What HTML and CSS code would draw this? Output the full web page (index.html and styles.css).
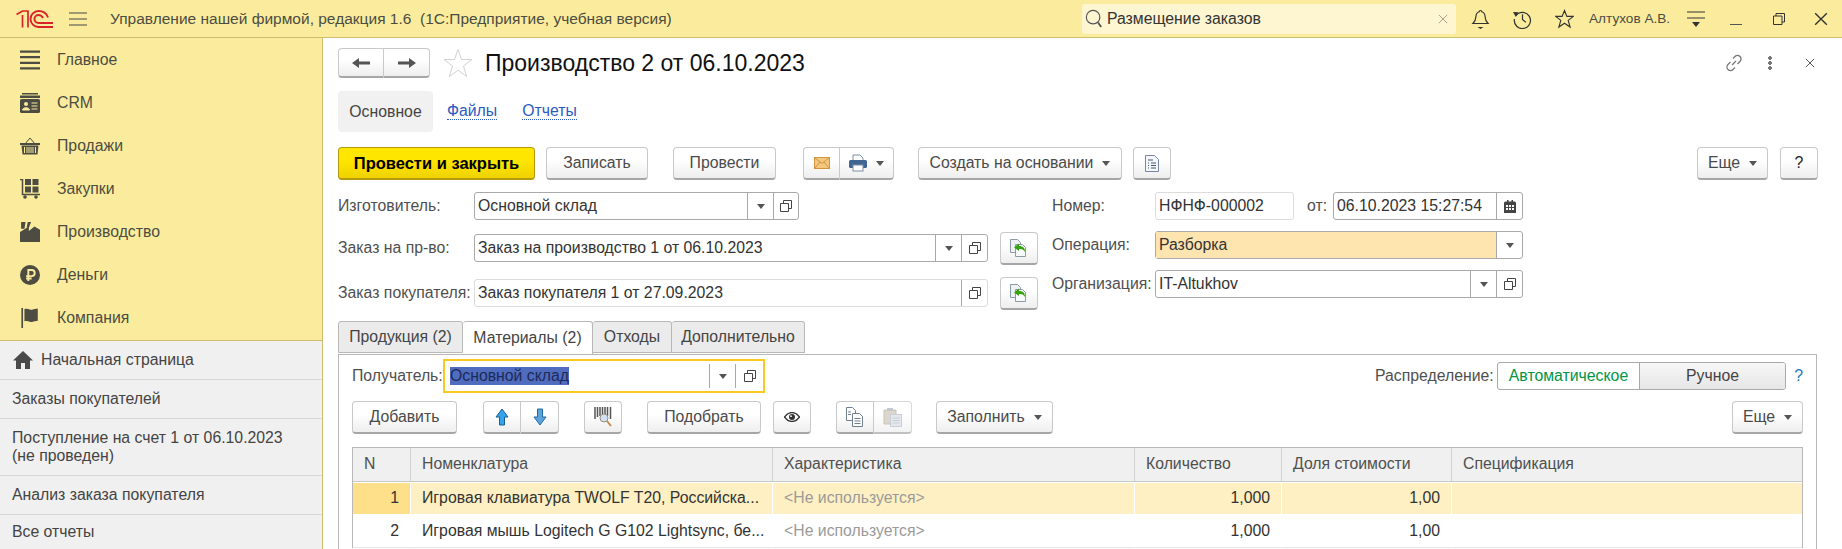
FILE: index.html

```html
<!DOCTYPE html>
<html lang="ru">
<head>
  <meta charset="UTF-8" />
  <meta name="viewport" content="width=device-width, initial-scale=1.0" />
  <title>Производство 2 от 06.10.2023</title>
  <link rel="stylesheet" href="styles.css">
</head>
<body>
  <svg class="sprite" xmlns="http://www.w3.org/2000/svg">
    <symbol id="i-caret" viewBox="0 0 8 5"><path d="M0 0h8L4 5z" fill="#555"/></symbol>
    <symbol id="i-open" viewBox="0 0 14 14"><path d="M4.500 4.500V1.500H12.500V9.500H9.500M1.500 4.500H9.500V12.500H1.500z" fill="none" stroke="#444" stroke-width="1"/></symbol>
    <symbol id="i-left" viewBox="0 0 18 12"><path d="M0 6l7-5v3.500h11v3H7V11z" fill="#555"/></symbol>
    <symbol id="i-right" viewBox="0 0 18 12"><path d="M18 6l-7-5v3.500H0v3h11V11z" fill="#555"/></symbol>
    <symbol id="i-star" viewBox="0 0 30 30"><path d="M15 1.500l3.500 10h10.500l-8.500 6.500 3.200 10.500L15 22.200 6.300 28.500 9.500 18 1 11.500h10.500z" fill="#fff" stroke="#d2d2d2" stroke-width="1"/></symbol>
    <symbol id="i-mail" viewBox="0 0 16 12"><rect x=".5" y=".5" width="15" height="11" fill="#f3c77f" stroke="#d2953b"/><path d="M1 1l7 5.500L15 1M1 11l5-6M15 11l-5-6" fill="none" stroke="#d2953b"/></symbol>
    <symbol id="i-print" viewBox="0 0 18 18"><path d="M4 1h7l3 3v4H4z" fill="#fff" stroke="#7d8ea3"/><rect y="6" width="18" height="8" rx="1.500" fill="#3f6791"/><rect x="4" y="11" width="10" height="6" fill="#fff" stroke="#7d8ea3"/></symbol>
    <symbol id="i-doc" viewBox="0 0 14 17"><path d="M.5.5h9l4 4v12H.5z" fill="#f4f7fb" stroke="#7488a5"/><path d="M3 5h5M3 8h1M6 8h5M3 10.500h1M6 10.500h5M3 13h1M6 13h5" stroke="#44566f"/></symbol>
    <symbol id="i-base" viewBox="0 0 20 20"><path d="M1.500 1.500h7l3 3v10h-10z" fill="#eef1f3" stroke="#8b9aa3"/><path d="M6.500 6.500h7l3 3v9h-10z" fill="#f7f9fa" stroke="#8b9aa3"/><path d="M5 9.500L10 5.500v2.500c4 0 6 2 6 6-1.500-2.500-3-3-6-3V13z" fill="#35a30f"/></symbol>
    <symbol id="i-cal" viewBox="0 0 12 13"><path d="M0 3a1.500 1.500 0 0 1 1.500-1.500H3V0h1.500v1.500h3V0H9v1.500h1.500A1.500 1.500 0 0 1 12 3v10H0z" fill="#444"/><path d="M2 5h2v2H2zM5 5h2v2H5zM8 5h2v2H8zM2 8h2v2H2zM5 8h2v2H5zM8 8h2v2H8z" fill="#fff"/></symbol>
    <symbol id="i-up" viewBox="0 0 14 18"><path d="M7 1l6 8H9.500v8h-5V9H1z" fill="#35a4ec" stroke="#14608f"/></symbol>
    <symbol id="i-down" viewBox="0 0 14 18"><path d="M7 17l6-8H9.500V1h-5v8H1z" fill="#5aa5dd" stroke="#27689c"/></symbol>
    <symbol id="i-barcode" viewBox="0 0 18 20"><path d="M1 0v12M3.500 0v10M6 0v9M8.500 0v7M11 0v7M13.500 0v9M16.500 0v12" stroke="#555" stroke-width="1.500"/><circle cx="10" cy="11" r="4" fill="#cfe3f5" stroke="#9a8f7c"/><path d="M13 14l4 5" stroke="#c28f4c" stroke-width="2"/></symbol>
    <symbol id="i-eye" viewBox="0 0 16 10"><path d="M.5 5C3 1.500 5.500.5 8 .5S13 1.500 15.500 5C13 8.500 10.500 9.500 8 9.500S3 8.500.5 5z" fill="#fff" stroke="#333" stroke-width="1.300"/><circle cx="8" cy="5" r="3" fill="#333"/><circle cx="7" cy="4.200" r=".9" fill="#fff"/></symbol>
    <symbol id="i-copy" viewBox="0 0 20 20"><path d="M1.500.5h6l3 3v10h-9z" fill="#fff" stroke="#6f7f8f"/><path d="M7.500 6.500h7l3 3v10h-10z" fill="#fff" stroke="#6f7f8f"/><path d="M3 5h3M3 7.500h3M9.500 11.500h6M9.500 14h6M9.500 16.500h6" stroke="#6f7f8f"/></symbol>
    <symbol id="i-paste" viewBox="0 0 20 20"><path d="M1 3h12v14H1z" fill="#cfc6bb" stroke="#b7ab9e"/><rect x="4" y="1" width="6" height="3" fill="#a9b2ba"/><path d="M7.500 7.500h11v12h-11z" fill="#d9dfe5" stroke="#b2bcc6"/><path d="M9.500 11h7M9.500 13.500h7M9.500 16h7" stroke="#b2bcc6"/></symbol>
    <symbol id="i-search" viewBox="0 0 20 22"><circle cx="9" cy="9" r="7.500" fill="none" stroke="#555" stroke-width="1.300"/><path d="M14.500 15l3.500 5" stroke="#555" stroke-width="2"/></symbol>
    <symbol id="i-cross" viewBox="0 0 12 12"><path d="M1 1l10 10M11 1L1 11" fill="none" stroke="currentColor" stroke-width="1.200"/></symbol>
    <symbol id="i-bell" viewBox="0 0 18 20"><path d="M9 1.500c.8 0 1.300.5 1.300 1.200 2.200.7 3.200 2.500 3.300 5 .1 3 1 4.800 3 6.800H1.400c2-2 2.900-3.800 3-6.800.1-2.500 1.100-4.300 3.300-5C7.700 2 8.200 1.500 9 1.500z" fill="none" stroke="#333" stroke-width="1.200"/><path d="M6 18h6L9 20z" fill="#333"/></symbol>
    <symbol id="i-history" viewBox="0 0 20 20"><path d="M3 6.500A8.500 8.500 0 1 1 1.500 10" fill="none" stroke="#333" stroke-width="1.300"/><path d="M0 2.500L5.800 3 3 8z" fill="#333"/><path d="M10 5v5.500l3.500 3" fill="none" stroke="#333" stroke-width="1.300"/></symbol>
    <symbol id="i-star-line" viewBox="0 0 20 20"><path d="M10 1l2.500 6.200h6.800l-5.400 4.300 2 7L10 14.500l-5.900 4 2-7L.7 7.200h6.800z" fill="none" stroke="#333" stroke-width="1.200"/></symbol>
    <symbol id="i-filter" viewBox="0 0 18 16"><path d="M0 1h18M0 7h18" stroke="#333"/><path d="M5 11h8l-4 5z" fill="#333"/></symbol>
    <symbol id="i-restore" viewBox="0 0 12 12"><path d="M3 3V.5h8.500V9H9M.5 3h8.500v8.500H.5z" fill="none" stroke="#333" stroke-width="1"/></symbol>
    <symbol id="i-link" viewBox="0 0 20 20"><path d="M8 12l4-4M9 5.500l2-2a3.500 3.500 0 0 1 5 5l-2.500 2.500M11 14.500l-2 2a3.500 3.500 0 0 1-5-5L6.500 9" fill="none" stroke="#777" stroke-width="1.300"/></symbol>
    <symbol id="i-main" viewBox="0 0 18 18"><path d="M0 1.500h18M0 6.500h18M0 11.500h18M0 16.500h18" stroke="#4c4c42" stroke-width="2"/></symbol>
    <symbol id="i-crm" viewBox="0 0 20 20"><path d="M2 0h16v1.500H2zM0 2.500h20V5H0z" fill="#4c4c42"/><rect y="6" width="20" height="14" rx="1.500" fill="#4c4c42"/><circle cx="6" cy="11" r="2" fill="#fbec9d"/><path d="M2.500 17c0-3 7-3 7 0zM11.500 10h6M11.500 13h6M11.500 16h6" fill="#fbec9d" stroke="#fbec9d" stroke-width="1"/></symbol>
    <symbol id="i-basket" viewBox="0 0 20 18"><path d="M5 7l5-6 5 6" fill="none" stroke="#4c4c42" stroke-width="1"/><path d="M0 6h20v2H0z" fill="#4c4c42"/><path d="M1.500 8.500h17l-1 9h-15z" fill="#4c4c42"/><path d="M4.500 10v6M7 10v6M9 10v6M11 10v6M13 10v6M15.500 10v6" stroke="#fbec9d"/></symbol>
    <symbol id="i-cart" viewBox="0 0 20 20"><path d="M0 .5h2.500v15H20" fill="none" stroke="#4c4c42" stroke-width="1.500"/><path d="M5 0h6v6H5zM12.500 0h6v6h-6zM5 7.500h6v6H5zM12.500 7.500h6v6h-6z" fill="#4c4c42"/><circle cx="5" cy="18" r="1.800" fill="#4c4c42"/><circle cx="16" cy="18" r="1.800" fill="#4c4c42"/></symbol>
    <symbol id="i-factory" viewBox="0 0 18 18"><path d="M1 0h4l-1 6H1zM7 0h3L8 5H6z" fill="#4c4c42"/><path d="M0 18V9l8-5v4l5-4 5 3v11z" fill="#4c4c42"/></symbol>
    <symbol id="i-money" viewBox="0 0 18 18"><circle cx="9" cy="9" r="9" fill="#4c4c42"/><path d="M7.500 14.500V4.500h3a2.700 2.700 0 0 1 0 5.500h-5M5.500 12.200h5" fill="none" stroke="#fbec9d" stroke-width="1.700"/></symbol>
    <symbol id="i-flag" viewBox="0 0 16 18"><path d="M1 0v18" stroke="#4c4c42" stroke-width="1.500"/><path d="M3 1c3-1.300 5 1 7 .5 1.500-.3 3-1 5-1v11c-2 0-3.500.7-5 1-2 .5-4-1.800-7-.5z" fill="#4c4c42"/></symbol>
    <symbol id="i-home" viewBox="0 0 20 18"><path d="M10 0l10 9.500h-3V18h-5v-6H8v6H3V9.500H0z" fill="#4a4a4a"/></symbol>
    <symbol id="i-logo" viewBox="0 0 37 18"><path d="M.5 4.500L6.500 1h5.500v16.500M6.500 5v12.500" fill="none" stroke="#d8232a" stroke-width="1.700"/><path d="M32 7.500C30.500 3 27 1 22.500 1a8 8 0 0 0 0 16H37M27 8c-1-2-2.500-3-4.500-3a4 4 0 0 0 0 8H37" fill="none" stroke="#d8232a" stroke-width="1.900"/></symbol>
    <symbol id="i-burger" viewBox="0 0 18 14"><path d="M0 1h18M0 7h18M0 13h18" stroke="#444" stroke-width="1.200"/></symbol>
  </svg>

  <header class="topbar">
    <svg class="logo"><use href="#i-logo"/></svg>
    <svg class="burger"><use href="#i-burger"/></svg>
    <div class="app-title">Управление нашей фирмой, редакция 1.6&nbsp; (1С:Предприятие, учебная версия)</div>
    <div class="search">
      <svg class="search-icon"><use href="#i-search"/></svg>
      <span class="search-text">Размещение заказов</span>
      <svg class="search-clear"><use href="#i-cross"/></svg>
    </div>
    <svg class="top-icon bell"><use href="#i-bell"/></svg>
    <svg class="top-icon history"><use href="#i-history"/></svg>
    <svg class="top-icon fav"><use href="#i-star-line"/></svg>
    <span class="user">Алтухов А.В.</span>
    <svg class="filter"><use href="#i-filter"/></svg>
    <span class="win-min"></span>
    <svg class="win-restore"><use href="#i-restore"/></svg>
    <svg class="win-close"><use href="#i-cross"/></svg>
  </header>

  <div class="layout">
    <aside class="sidebar">
      <nav class="sections">
        <a class="section"><svg><use href="#i-main"/></svg>Главное</a>
        <a class="section"><svg><use href="#i-crm"/></svg>CRM</a>
        <a class="section"><svg><use href="#i-basket"/></svg>Продажи</a>
        <a class="section"><svg><use href="#i-cart"/></svg>Закупки</a>
        <a class="section"><svg><use href="#i-factory"/></svg>Производство</a>
        <a class="section"><svg><use href="#i-money"/></svg>Деньги</a>
        <a class="section"><svg><use href="#i-flag"/></svg>Компания</a>
      </nav>
      <div class="open-list">
        <div class="open-item open-home"><svg><use href="#i-home"/></svg>Начальная страница</div>
        <div class="open-item">Заказы покупателей</div>
        <div class="open-item open-tall">Поступление на счет 1 от 06.10.2023<br>(не проведен)</div>
        <div class="open-item">Анализ заказа покупателя</div>
        <div class="open-item">Все отчеты</div>
      </div>
    </aside>

    <main class="form">
      <div class="form-head">
        <div class="btn-group nav-group">
          <button class="btn"><svg class="ico-arrow"><use href="#i-left"/></svg></button>
          <button class="btn"><svg class="ico-arrow"><use href="#i-right"/></svg></button>
        </div>
        <svg class="head-star"><use href="#i-star"/></svg>
        <h1 class="doc-title">Производство 2 от 06.10.2023</h1>
        <div class="head-tools">
          <svg class="tool-link"><use href="#i-link"/></svg>
          <span class="tool-dots"></span>
          <svg class="tool-close"><use href="#i-cross"/></svg>
        </div>
      </div>

      <div class="page-tabs">
        <span class="page-tab-active">Основное</span>
        <a class="page-link">Файлы</a>
        <a class="page-link">Отчеты</a>
      </div>

      <div class="toolbar">
        <button class="btn btn-primary">Провести и закрыть</button>
        <button class="btn btn-save">Записать</button>
        <button class="btn btn-post">Провести</button>
        <div class="btn-group mail-group">
          <button class="btn btn-mail"><svg class="ico-mail"><use href="#i-mail"/></svg></button>
          <button class="btn btn-print"><svg class="ico-print"><use href="#i-print"/></svg><svg class="caret"><use href="#i-caret"/></svg></button>
        </div>
        <button class="btn btn-create">Создать на основании<svg class="caret"><use href="#i-caret"/></svg></button>
        <button class="btn btn-docs"><svg class="ico-doc"><use href="#i-doc"/></svg></button>
        <button class="btn btn-more">Еще<svg class="caret"><use href="#i-caret"/></svg></button>
        <button class="btn btn-help">?</button>
      </div>

      <div class="fields">
        <div class="fields-left">
          <div class="field-row">
            <label class="field-label">Изготовитель:</label>
            <div class="field field-short">
              <span class="field-value">Основной склад</span>
              <span class="field-btn"><svg class="caret"><use href="#i-caret"/></svg></span>
              <span class="field-btn field-btn-last"><svg class="ico-open"><use href="#i-open"/></svg></span>
            </div>
          </div>
          <div class="field-row row-order">
            <label class="field-label">Заказ на пр-во:</label>
            <div class="field field-long">
              <span class="field-value">Заказ на производство 1 от 06.10.2023</span>
              <span class="field-btn"><svg class="caret"><use href="#i-caret"/></svg></span>
              <span class="field-btn"><svg class="ico-open"><use href="#i-open"/></svg></span>
            </div>
            <button class="btn btn-base"><svg class="ico-base"><use href="#i-base"/></svg></button>
          </div>
          <div class="field-row row-customer">
            <label class="field-label">Заказ покупателя:</label>
            <div class="field field-long field-readonly">
              <span class="field-value">Заказ покупателя 1 от 27.09.2023</span>
              <span class="field-btn"><svg class="ico-open"><use href="#i-open"/></svg></span>
            </div>
            <button class="btn btn-base"><svg class="ico-base"><use href="#i-base"/></svg></button>
          </div>
        </div>

        <div class="fields-right">
          <div class="field-row">
            <label class="field-label label-right">Номер:</label>
            <div class="field field-number field-readonly"><span class="field-value">НФНФ-000002</span></div>
            <label class="field-label label-date">от:</label>
            <div class="field field-date">
              <span class="field-value">06.10.2023 15:27:54</span>
              <span class="field-btn"><svg class="ico-cal"><use href="#i-cal"/></svg></span>
            </div>
          </div>
          <div class="field-row row-operation">
            <label class="field-label label-right">Операция:</label>
            <div class="field field-wide field-marked">
              <span class="field-value">Разборка</span>
              <span class="field-btn"><svg class="caret"><use href="#i-caret"/></svg></span>
            </div>
          </div>
          <div class="field-row row-company">
            <label class="field-label label-right">Организация:</label>
            <div class="field field-wide">
              <span class="field-value">IT-Altukhov</span>
              <span class="field-btn"><svg class="caret"><use href="#i-caret"/></svg></span>
              <span class="field-btn"><svg class="ico-open"><use href="#i-open"/></svg></span>
            </div>
          </div>
        </div>
      </div>

      <div class="tabs">
        <div class="tab tab-products">Продукция (2)</div>
        <div class="tab tab-active tab-materials">Материалы (2)</div>
        <div class="tab tab-waste">Отходы</div>
        <div class="tab tab-extra">Дополнительно</div>
      </div>

      <section class="panel">
        <div class="panel-top">
          <label class="field-label label-recipient">Получатель:</label>
          <div class="field field-focus">
            <span class="field-value"><span class="selected">Основной склад</span></span>
            <span class="field-btn"><svg class="caret"><use href="#i-caret"/></svg></span>
            <span class="field-btn"><svg class="ico-open"><use href="#i-open"/></svg></span>
          </div>
          <label class="field-label label-split">Распределение:</label>
          <div class="switch">
            <span class="switch-on">Автоматическое</span>
            <span class="switch-off">Ручное</span>
          </div>
          <span class="hint">?</span>
        </div>

        <div class="table-bar">
          <button class="btn btn-add">Добавить</button>
          <div class="btn-group move-group">
            <button class="btn btn-move"><svg class="ico-move"><use href="#i-up"/></svg></button>
            <button class="btn btn-move"><svg class="ico-move"><use href="#i-down"/></svg></button>
          </div>
          <button class="btn btn-barcode"><svg class="ico-barcode"><use href="#i-barcode"/></svg></button>
          <button class="btn btn-pick">Подобрать</button>
          <button class="btn btn-eye"><svg class="ico-eye"><use href="#i-eye"/></svg></button>
          <div class="btn-group clip-group">
            <button class="btn btn-clip"><svg class="ico-clip"><use href="#i-copy"/></svg></button>
            <button class="btn btn-clip btn-dim"><svg class="ico-clip"><use href="#i-paste"/></svg></button>
          </div>
          <button class="btn btn-fill">Заполнить<svg class="caret"><use href="#i-caret"/></svg></button>
          <button class="btn btn-more-table">Еще<svg class="caret"><use href="#i-caret"/></svg></button>
        </div>

        <table class="grid">
          <colgroup>
            <col class="col-n"><col class="col-name"><col class="col-char"><col class="col-qty"><col class="col-share"><col>
          </colgroup>
          <thead>
            <tr><th>N</th><th>Номенклатура</th><th>Характеристика</th><th>Количество</th><th>Доля стоимости</th><th>Спецификация</th></tr>
          </thead>
          <tbody>
            <tr class="row-current">
              <td class="num cell-n">1</td>
              <td>Игровая клавиатура TWOLF T20, Российска...</td>
              <td class="muted">&lt;Не используется&gt;</td>
              <td class="num">1,000</td>
              <td class="num">1,00</td>
              <td></td>
            </tr>
            <tr>
              <td class="num">2</td>
              <td>Игровая мышь Logitech G G102 Lightsync, бе...</td>
              <td class="muted">&lt;Не используется&gt;</td>
              <td class="num">1,000</td>
              <td class="num">1,00</td>
              <td></td>
            </tr>
          </tbody>
        </table>
      </section>
    </main>
  </div>
</body>
</html>
```

FILE: styles.css

```css
* {
  box-sizing: border-box;
}
html, body {
  height: 549px;
  overflow: hidden;
}
body {
  margin: 0;
  font-family: "Liberation Sans", Arial, sans-serif;
  font-size: 15.8px;
  color: #4a4a4a;
  background: #fff;
  display: flex;
  flex-direction: column;
}
svg {
  display: block;
  flex: none;
}
.sprite {
  display: none;
}

/* top bar */
.topbar {
  height: 38px;
  flex: none;
  display: flex;
  align-items: center;
  background: #fbec9d;
  border-bottom: 1px solid #cdbd6f;
  color: #4c4c42;
}
.logo {
  width: 37px;
  height: 18px;
  margin-left: 16px;
}
.burger {
  width: 18px;
  height: 14px;
  margin-left: 16px;
}
.app-title {
  margin-left: 23px;
  width: 972px;
  white-space: nowrap;
  font-size: 15.5px;
}
.search {
  width: 374px;
  height: 30px;
  display: flex;
  align-items: center;
  background: #fdf6d0;
  border-radius: 3px;
  color: #333;
}
.search-icon {
  width: 18px;
  height: 20px;
  margin-left: 3px;
}
.search-text {
  margin-left: 4px;
  flex: 1;
}
.search-clear {
  width: 10px;
  height: 10px;
  margin-right: 8px;
  color: #a8a488;
}
.top-icon {
  width: 19px;
  height: 20px;
}
.bell {
  margin-left: 15px;
}
.history {
  margin-left: 23px;
}
.fav {
  margin-left: 23px;
}
.user {
  margin-left: 15px;
  width: 98px;
  white-space: nowrap;
  font-size: 13.6px;
}
.filter {
  width: 18px;
  height: 16px;
}
.win-min {
  width: 12px;
  height: 1px;
  margin: 12px 0 0 25px;
  background: #555;
}
.win-restore {
  width: 12px;
  height: 12px;
  margin-left: 31px;
}
.win-close {
  width: 14px;
  height: 14px;
  margin-left: 29px;
  color: #333;
}

.layout {
  flex: 1;
  display: flex;
  min-height: 0;
}

/* sidebar */
.sidebar {
  width: 323px;
  flex: none;
  background: #f0f0f0;
  border-right: 1px solid #cdbd6f;
}
.sections {
  background: #fbec9d;
  height: 303px;
  border-bottom: 1px solid #cdbd6f;
}
.section {
  height: 43px;
  display: flex;
  align-items: center;
  padding-left: 20px;
  color: #4c4c42;
}
.section svg {
  width: 20px;
  height: 20px;
  margin-right: 17px;
}
.open-item {
  height: 39px;
  display: flex;
  align-items: center;
  padding-left: 12px;
  border-bottom: 1px solid #d6d6d6;
  color: #444;
}
.open-item:last-child {
  height: 33px;
  border-bottom: 0;
}
.open-tall {
  height: 57px;
  line-height: 18px;
  display: block;
  padding-top: 10px;
}
.open-home svg {
  width: 20px;
  height: 18px;
  margin: 0 8px 0 1px;
}

/* document form */
.form {
  flex: 1;
  min-width: 0;
  padding: 10px 24px 0 15px;
}
.form-head {
  height: 30px;
  display: flex;
  align-items: center;
}
.btn-group {
  display: flex;
}
.btn-group .btn:not(:first-child) {
  border-top-left-radius: 0;
  border-bottom-left-radius: 0;
  border-left: 0;
}
.btn-group .btn:not(:last-child) {
  border-top-right-radius: 0;
  border-bottom-right-radius: 0;
}
.btn {
  height: 33px;
  padding: 0;
  display: flex;
  align-items: center;
  justify-content: center;
  font: inherit;
  color: #4a4a4a;
  background: linear-gradient(#fff 40%, #eeeeee);
  border: 1px solid #c9c9c9;
  border-bottom: 2px solid #a6a6a6;
  border-radius: 4px;
}
.nav-group .btn {
  width: 46px;
  height: 30px;
}
.ico-arrow {
  width: 18px;
  height: 12px;
}
.head-star {
  width: 30px;
  height: 30px;
  margin-left: 13px;
}
.doc-title {
  margin: 0 0 0 12px;
  font-size: 23px;
  font-weight: normal;
  color: #111;
}
.head-tools {
  margin-left: auto;
  display: flex;
  align-items: center;
}
.tool-link {
  width: 20px;
  height: 20px;
}
.tool-dots {
  width: 4px;
  height: 14px;
  margin-left: 24px;
  background: radial-gradient(circle at 2px 2px, #777 2px, transparent 2px) 0 0 / 4px 5px;
}
.tool-close {
  width: 10px;
  height: 10px;
  margin: 0 3px 0 33px;
  color: #555;
}

.page-tabs {
  height: 41px;
  margin-top: 13px;
  display: flex;
  align-items: center;
}
.page-tab-active {
  width: 95px;
  height: 41px;
  display: flex;
  align-items: center;
  justify-content: center;
  background: #f1f1f1;
  border-radius: 4px;
  color: #444;
}
.page-link {
  margin-left: 14px;
  margin-right: 11px;
  color: #2b5cc0;
  border-bottom: 1px dotted #2b5cc0;
  line-height: 16px;
}

.toolbar {
  height: 33px;
  margin-top: 15px;
  display: flex;
}
.btn-primary {
  width: 197px;
  font-size: 16.5px;
  font-weight: bold;
  color: #000;
  background: linear-gradient(#ffe600 40%, #efd200);
  border-color: #b59a0c;
}
.btn-save {
  width: 102px;
  margin-left: 11px;
}
.btn-post {
  width: 103px;
  margin-left: 25px;
}
.mail-group {
  margin-left: 27px;
}
.btn-mail {
  width: 37px;
}
.btn-print {
  width: 54px;
  justify-content: flex-start;
  padding-left: 9px;
}
.btn-print .caret {
  margin-left: 10px;
}
.ico-mail {
  width: 16px;
  height: 12px;
}
.ico-print {
  width: 18px;
  height: 18px;
}
.caret {
  width: 8px;
  height: 5px;
}
.btn .caret {
  margin-left: 9px;
}
.btn-create {
  width: 204px;
  margin-left: 24px;
}
.btn-docs {
  width: 38px;
  margin-left: 11px;
}
.ico-doc {
  width: 14px;
  height: 17px;
}
.btn-more {
  width: 71px;
  margin-left: auto;
}
.btn-help {
  width: 38px;
  margin-left: 12px;
  color: #222;
}

/* fields */
.fields {
  display: flex;
  margin-top: 12px;
}
.fields-left {
  width: 700px;
}
.fields-right {
  margin-left: 14px;
}
.field-row {
  height: 28px;
  display: flex;
  align-items: center;
}
.row-order {
  margin-top: 14px;
}
.row-customer {
  margin-top: 17px;
}
.row-operation,
.row-company {
  margin-top: 11px;
}
.field-label {
  width: 136px;
  flex: none;
  color: #4f4f4f;
  white-space: nowrap;
}
.label-right {
  width: 103px;
}
.label-date {
  width: 26px;
  margin-left: 13px;
}
.field {
  height: 28px;
  display: flex;
  background: #fff;
  border: 1px solid #a9a9a9;
  border-radius: 3px;
  color: #333;
}
.field-value {
  flex: 1;
  min-width: 0;
  padding-left: 3px;
  line-height: 26px;
  white-space: nowrap;
}
.field-btn {
  width: 26px;
  flex: none;
  display: flex;
  align-items: center;
  justify-content: center;
  border-left: 1px solid #a9a9a9;
}
.field-btn-last {
  width: 25px;
}
.field-short {
  width: 325px;
}
.field-long {
  width: 514px;
}
.field-number {
  width: 139px;
}
.field-date {
  width: 190px;
}
.field-wide {
  width: 368px;
}
.field-readonly {
  border-color: #dcdcdc;
}
.field-readonly .field-btn {
  border-left-color: #a9a9a9;
}
.field-marked .field-value {
  background: #fee4af;
}
.ico-open {
  width: 14px;
  height: 14px;
}
.ico-cal {
  width: 12px;
  height: 13px;
}
.btn-base {
  width: 38px;
  flex: none;
  margin-left: 12px;
}
.ico-base {
  width: 20px;
  height: 20px;
}

/* tabs */
.tabs {
  display: flex;
  margin-top: 14px;
  position: relative;
  z-index: 1;
}
.tab {
  height: 32px;
  display: flex;
  align-items: center;
  justify-content: center;
  background: #ebebeb;
  border: 1px solid #b8b8b8;
  border-left: 0;
  border-radius: 3px 3px 0 0;
  color: #444;
}
.tab-products {
  width: 125px;
  border-left: 1px solid #b8b8b8;
}
.tab-materials {
  width: 130px;
}
.tab-waste {
  width: 79px;
}
.tab-extra {
  width: 133px;
}
.tab-active {
  height: 33px;
  background: #fff;
  border-bottom: 0;
}
.panel {
  margin: 0 1px 0 0;
  padding: 4px 13px 0;
  height: 196px;
  overflow: hidden;
  border: 1px solid #b8b8b8;
  border-bottom: 0;
}

.panel-top {
  height: 34px;
  display: flex;
  align-items: center;
}
.label-recipient {
  width: 91px;
}
.field-focus {
  width: 322px;
  height: 34px;
  border: 2px solid #f9c91f;
  border-radius: 0;
}
.field-focus .field-value {
  padding: 0 0 0 5px;
  line-height: 30px;
}
.field-focus .field-btn {
  margin: 3px 0;
}
.field-focus .field-btn:last-child {
  width: 28px;
}
.selected {
  background: #4f6cbf;
  color: #1c2a58;
  display: inline-block;
  line-height: 18px;
}
.label-split {
  width: 122px;
  margin-left: auto;
}
.switch {
  width: 289px;
  height: 28px;
  display: flex;
  border: 1px solid #a9a9a9;
  border-radius: 3px;
  overflow: hidden;
}
.switch-on {
  width: 142px;
  line-height: 26px;
  text-align: center;
  color: #009645;
  border-right: 1px solid #a9a9a9;
}
.switch-off {
  flex: 1;
  line-height: 26px;
  text-align: center;
  background: linear-gradient(#f7f7f7, #e6e6e6);
  color: #444;
}
.hint {
  width: 17px;
  text-align: right;
  color: #1a78c2;
}

.table-bar {
  height: 33px;
  margin-top: 8px;
  display: flex;
}
.btn-add {
  width: 105px;
}
.move-group {
  margin-left: 26px;
}
.btn-move {
  width: 38px;
}
.ico-move {
  width: 14px;
  height: 18px;
}
.btn-barcode {
  width: 38px;
  margin-left: 25px;
}
.ico-barcode {
  width: 18px;
  height: 20px;
}
.btn-pick {
  width: 114px;
  margin-left: 25px;
}
.btn-eye {
  width: 38px;
  margin-left: 12px;
}
.ico-eye {
  width: 16px;
  height: 10px;
}
.clip-group {
  margin-left: 25px;
}
.btn-clip {
  width: 38px;
}
.btn-dim {
  opacity: .7;
}
.ico-clip {
  width: 20px;
  height: 20px;
}
.btn-fill {
  width: 117px;
  margin-left: 24px;
}
.btn-more-table {
  width: 71px;
  margin-left: auto;
}

/* table */
.grid {
  width: 100%;
  margin-top: 13px;
  table-layout: fixed;
  border-collapse: separate;
  border-spacing: 0;
  border: 1px solid #b8b8b8;
  border-bottom: 0;
}
.col-n {
  width: 58px;
}
.col-name,
.col-char {
  width: 362px;
}
.col-qty {
  width: 147px;
}
.col-share {
  width: 170px;
}
.grid th {
  height: 34px;
  padding: 0 11px 2px;
  font-weight: normal;
  text-align: left;
  color: #4f4f4f;
  background: #f0f0f0;
  border-right: 1px solid #d2d2d2;
  border-bottom: 1px solid #c8c8c8;
}
.grid th:last-child,
.grid td:last-child {
  border-right: 0;
}
.grid td {
  height: 33px;
  padding: 0 11px 2px;
  color: #333;
  white-space: nowrap;
  overflow: hidden;
  border-right: 1px solid #fff;
  border-top: 1px solid #fff;
  border-bottom: 1px solid #e4e4e4;
}
.grid .num {
  text-align: right;
}
.grid .muted {
  color: #9a9a9a;
}
.row-current td {
  background: #fef0c2;
  border-bottom-color: #fff;
}
.row-current .cell-n {
  background: #ffe08a;
}
```
